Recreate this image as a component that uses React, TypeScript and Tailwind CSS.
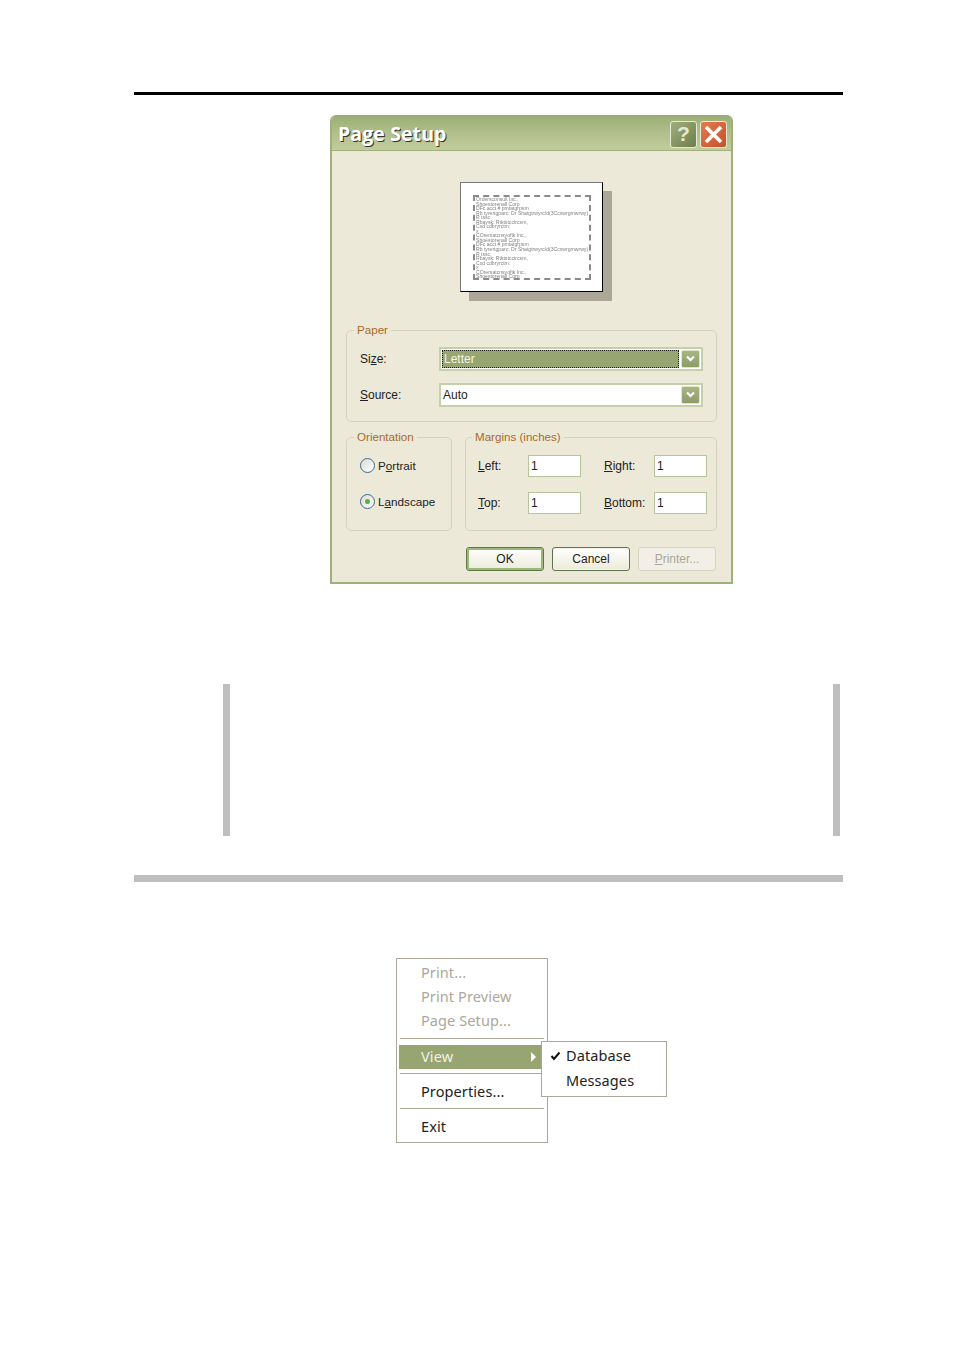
const PREVIEW_LINES = [
  "Ordersconsult Inc.,",
  "Shoestorenall Corp",
  "DFc acct # pmtatgrpsm",
  " Rb tyrertgparc: Dr Shatgtrwyrc/d(3Ccxwrgmwrwy)",
  "R tssc:",
  "Rbaysk: Rtktstcctrcsm,",
  "Cxd cdbryrctm:",
  "x",
  "COrersatcnsyoftk Inc.,",
  "Shoestorenall Corp",
  "DFc acct # pmtatgrpsm",
  " Rb tyrertgparc: Dr Shatgtrwyrc/d(3Ccxwrgmwrwy)",
  "R tssc:",
  "Rbaysk: Rtktstcctrcsm,",
  "Cxd cdbryrctm:",
  "x",
  "COrersatcnsyoftk Inc.,",
  "Shoestorenall Corp",
];

function Chevron() {
  return (
    <div className="w-[19px] h-[18px] bg-gradient-to-b from-[#a8b585] to-[#8d9c69] rounded-[2px] border border-[#dfe5c8] flex items-center justify-center">
      <svg width="11" height="8" viewBox="0 0 11 8" fill="none">
        <path d="M2 1.5 L5.5 5 L9 1.5" stroke="#ffffff" strokeWidth="2.2" />
      </svg>
    </div>
  );
}

function Select({ value, selected }: { value: string; selected?: boolean }) {
  return (
    <div className="w-[264px] h-[24px] bg-white border-2 border-[#c5d0a8] flex items-center justify-between pl-[1px] pr-[1px]">
      {selected ? (
        <div className="w-[237px] h-[18px] bg-[#97a573] border border-dotted border-[#222] text-[#f4f4ea] pl-[1px] leading-[17px] text-[12px]">
          {value}
        </div>
      ) : (
        <div className="pl-[1px] text-[12px] text-[#222]">{value}</div>
      )}
      <Chevron />
    </div>
  );
}

function Field({ label, hot, rest, width }: { label: string; hot: string; rest: string; width: string }) {
  return (
    <div className="flex items-center">
      <div className={`${width} text-[12px] text-[#222]`}>
        <u>{hot}</u>
        {rest}
        {label}
      </div>
      <div className="w-[53px] h-[22px] bg-white border border-[#b7c59c] pl-[2px] text-[12px] leading-[20px] text-[#222]">1</div>
    </div>
  );
}

function Radio({ checked, hot, before, rest }: { checked?: boolean; hot: string; before: string; rest: string }) {
  return (
    <div className="flex items-center gap-[3px] text-[11.7px] text-[#222]">
      <div className="w-[15px] h-[15px] rounded-full border border-[#3d6a8f] bg-gradient-to-br from-[#dcdcd0] to-white flex items-center justify-center">
        {checked && <div className="w-[5px] h-[5px] rounded-full bg-[#4fb34a]" />}
      </div>
      <div>
        {before}
        <u>{hot}</u>
        {rest}
      </div>
    </div>
  );
}

function Group({ title, className, children }: { title: string; className: string; children: React.ReactNode }) {
  return (
    <fieldset className={`border border-[#d3d2c0] rounded-[5px] ${className}`}>
      <legend className="-ml-[6px] px-[3px] text-[11.6px] leading-[14px] text-[#a9692b]">{title}</legend>
      {children}
    </fieldset>
  );
}

function DialogButton({ children, variant }: { children: React.ReactNode; variant?: "default" | "disabled" }) {
  const look =
    variant === "disabled"
      ? "border border-[#d4d3c4] text-[#a9a794] bg-[#f2f0e6]"
      : variant === "default"
        ? "border border-[#5f7a45] shadow-[inset_0_0_0_2px_#9cb77a] text-[#222] bg-gradient-to-b from-white to-[#ecebd9]"
        : "border border-[#5f7350] shadow-[inset_0_0_0_1px_#f4f3e8] text-[#222] bg-gradient-to-b from-white to-[#ecebd9]";
  return (
    <div className={`w-[78px] h-[24px] rounded-[3px] flex items-center justify-center text-[12px] ${look}`}>{children}</div>
  );
}

function PageSetupDialog() {
  return (
    <div className="w-[403px] h-[469px] ml-[196px] border-x-[2px] border-b-[2px] border-[#9fb07c] rounded-t-[6px] bg-[#ece9d8] overflow-hidden" style={{ fontFamily: "'Liberation Sans', Arial, sans-serif" }}>
      <div className="h-[36px] -mx-[2px] pl-[8px] pr-[6px] flex items-center justify-between bg-gradient-to-b from-[#9aac74] via-[#b0bf8c] to-[#c2cd9a] border-b border-[#9fb07c]">
        <div className="mt-[3px] text-[19.5px] font-bold tracking-[0.1px] text-white [text-shadow:1px_1px_0_#33332a]" style={{ fontFamily: "'Open Sans', sans-serif" }}>
          Page Setup
        </div>
        <div className="flex gap-[3px] pt-[3px]">
          <div className="w-[27px] h-[27px] rounded-[3px] border border-[#e6ebd6] bg-gradient-to-br from-[#9fae7d] to-[#6f7f4b] flex items-center justify-center text-[21px] font-bold text-[#e4e9d4]">?</div>
          <div className="w-[27px] h-[27px] rounded-[3px] border border-[#e6ebd6] bg-gradient-to-br from-[#e47a50] to-[#c4512c] flex items-center justify-center">
            <svg width="21" height="21" viewBox="0 0 21 21" fill="none">
              <path d="M3 3 L18 18 M18 3 L3 18" stroke="#ffffff" strokeWidth="3.8" />
            </svg>
          </div>
        </div>
      </div>

      <div className="mt-[31px] ml-[128px] w-[143px] h-[110px] bg-white border-y border-l border-t-[#777] border-l-[#777] border-b-black border-r border-r-black shadow-[9px_9px_0_#aca899] pt-[12px] pl-[12px]">
        <div className="w-[118px] h-[85px] border-2 border-dashed border-[#8a8a8a] overflow-hidden pl-[1px] text-[5.1px] leading-[4.55px] text-[#808080] whitespace-nowrap blur-[0.3px]">
          {PREVIEW_LINES.map((line, i) => (
            <div key={i}>{line}</div>
          ))}
        </div>
      </div>

      <Group title="Paper" className="mt-[31px] ml-[14px] w-[371px] h-[99px] pl-[13px]">
        <div className="flex items-center mt-[10px]">
          <div className="w-[79px] text-[12px] text-[#222]">
            Si<u>z</u>e:
          </div>
          <Select value="Letter" selected />
        </div>
        <div className="flex items-center mt-[12px]">
          <div className="w-[79px] text-[12px] text-[#222]">
            <u>S</u>ource:
          </div>
          <Select value="Auto" />
        </div>
      </Group>

      <div className="flex gap-[13px] ml-[14px] mt-[8px]">
        <Group title="Orientation" className="w-[106px] h-[101px] pl-[13px]">
          <div className="mt-[13px]">
            <Radio before="P" hot="o" rest="rtrait" />
          </div>
          <div className="mt-[18px]">
            <Radio checked before="L" hot="a" rest="ndscape" />
          </div>
        </Group>
        <Group title="Margins (inches)" className="w-[252px] h-[101px] pl-[12px]">
          <div className="flex mt-[11px]">
            <div className="w-[126px]">
              <Field label=":" hot="L" rest="eft" width="w-[50px]" />
            </div>
            <Field label=":" hot="R" rest="ight" width="w-[50px]" />
          </div>
          <div className="flex mt-[15px]">
            <div className="w-[126px]">
              <Field label=":" hot="T" rest="op" width="w-[50px]" />
            </div>
            <Field label=":" hot="B" rest="ottom" width="w-[50px]" />
          </div>
        </Group>
      </div>

      <div className="flex gap-[8px] ml-[134px] mt-[16px]">
        <DialogButton variant="default">OK</DialogButton>
        <DialogButton>Cancel</DialogButton>
        <DialogButton variant="disabled">
          <span>
            <u>P</u>rinter...
          </span>
        </DialogButton>
      </div>
    </div>
  );
}

function MenuItem({ label, disabled }: { label: string; disabled?: boolean }) {
  return <div className={`h-[24px] leading-[24px] pl-[24px] ${disabled ? "text-[#aca899]" : "text-[#222]"}`}>{label}</div>;
}

function Separator() {
  return <div className="h-[1px] mx-[3px] bg-[#aca899] border-b border-white box-content" />;
}

function ContextMenu() {
  return (
    <div className="relative w-[152px] h-[185px] ml-[262px] border border-[#aca899] bg-white text-[14.5px] tracking-[0.1px]" style={{ fontFamily: "'Noto Sans', sans-serif" }}>
      <div className="pt-[1px]">
        <MenuItem label="Print..." disabled />
        <MenuItem label="Print Preview" disabled />
        <MenuItem label="Page Setup..." disabled />
      </div>
      <div className="mt-[6px]">
        <Separator />
      </div>
      <div className="mt-[5px] ml-[2px] mr-[3px] h-[24px] bg-[#97a573] flex items-center justify-between pl-[22px] pr-[7px] text-[#f2f2e6]">
        <span>View</span>
        <svg width="7" height="10" viewBox="0 0 7 10">
          <path d="M1 0 L6 5 L1 10 Z" fill="#ffffff" />
        </svg>
      </div>
      <div className="mt-[4px]">
        <Separator />
      </div>
      <div className="mt-[4px]">
        <MenuItem label="Properties..." />
      </div>
      <div className="mt-[5px]">
        <Separator />
      </div>
      <div className="mt-[4px]">
        <MenuItem label="Exit" />
      </div>

      {/* submenu hangs over the main menu edge */}
      <div className="absolute left-[144px] top-[82px] w-[126px] h-[56px] border border-[#aca899] bg-white pt-[2px] text-[#222]">
        <div className="h-[24px] flex items-center">
          <svg className="ml-[8px]" width="11" height="10" viewBox="0 0 11 10" fill="none">
            <path d="M1.5 5 L4 8 L9.5 1.5" stroke="#111111" strokeWidth="2" />
          </svg>
          <span className="ml-[5px]">Database</span>
        </div>
        <div className="h-[24px] leading-[24px] pl-[24px]">Messages</div>
      </div>
    </div>
  );
}

export default function App() {
  return (
    <div className="w-[954px] h-[1350px] bg-white overflow-hidden pt-[92px]">
      <div className="ml-[134px] w-[709px]">
        <div className="h-[3px] bg-black" />
        <div className="mt-[20px]">
          <PageSetupDialog />
        </div>

        <div className="mt-[100px] ml-[89px] w-[617px] h-[152px] border-x-[7px] border-[#bfbfbf]" />

        <div className="mt-[39px] h-[7px] bg-[#bfbfbf]" />

        <div className="mt-[76px]">
          <ContextMenu />
        </div>
      </div>
    </div>
  );
}
